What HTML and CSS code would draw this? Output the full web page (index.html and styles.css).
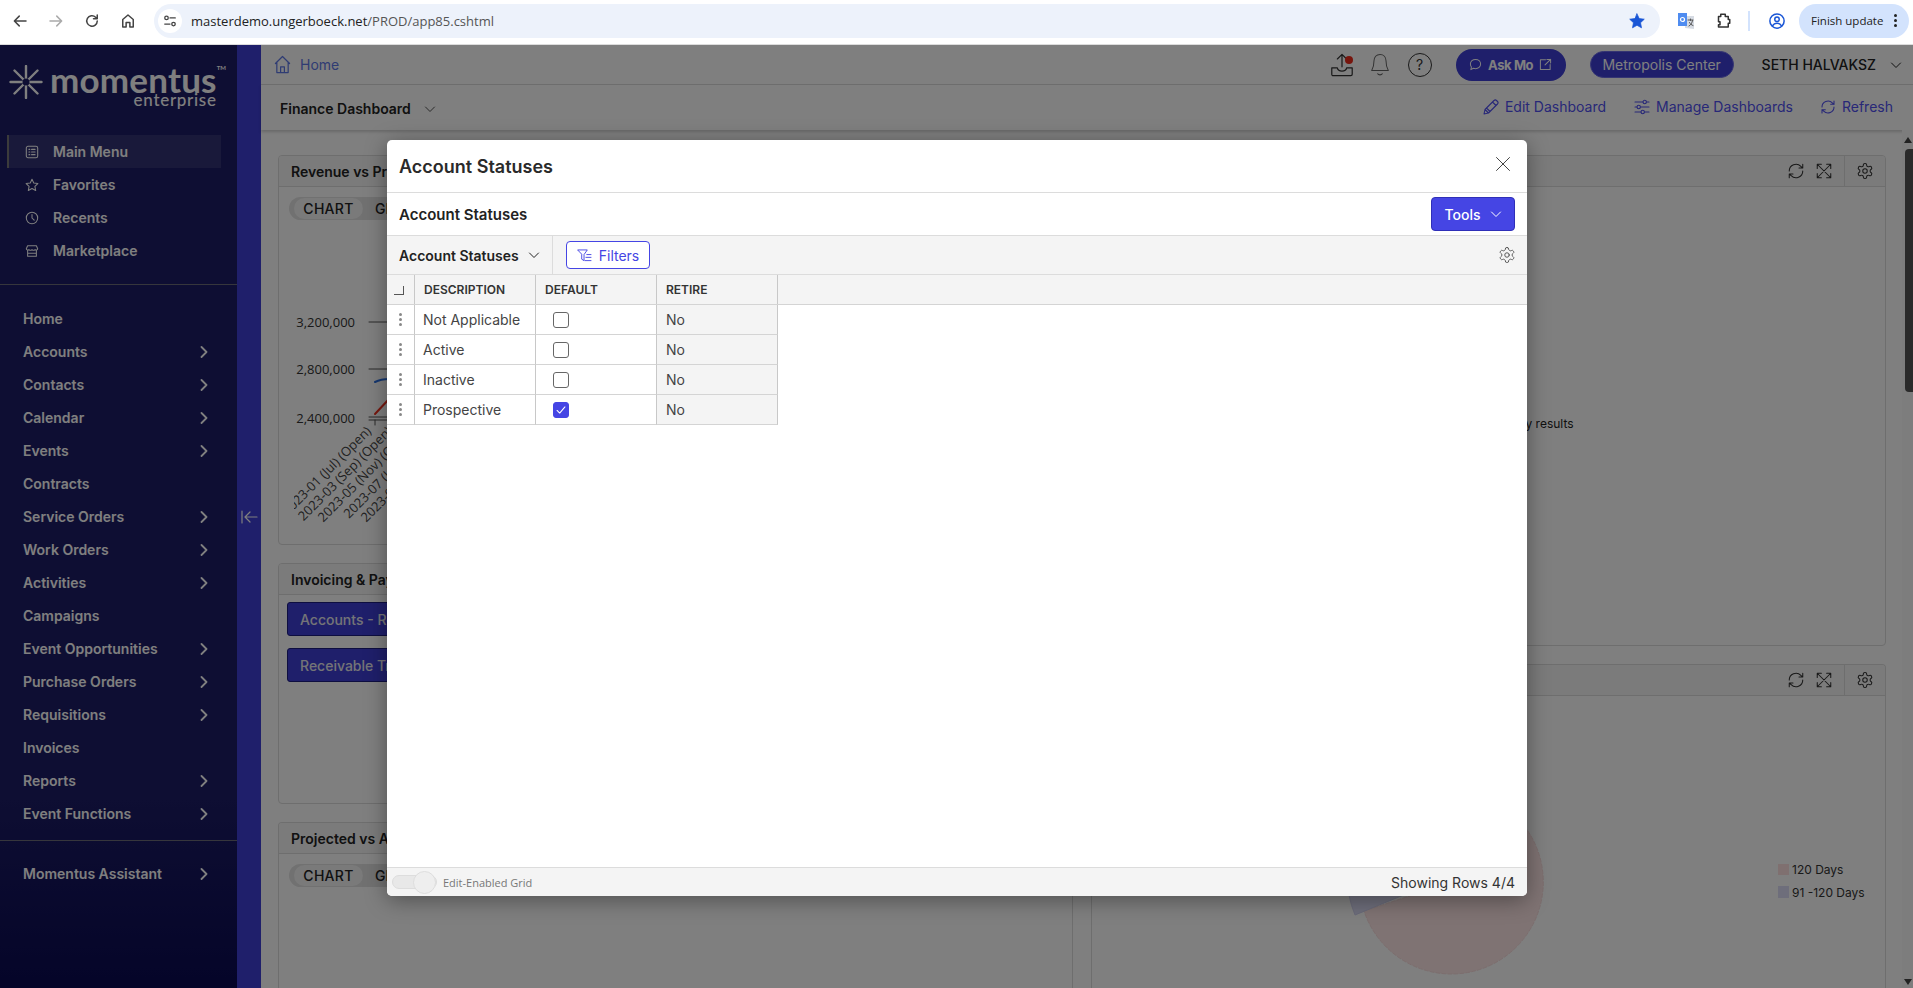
FILE: index.html
```html
<!DOCTYPE html>
<html>
  <head>
    <meta charset="utf-8" />
    <title>Finance Dashboard</title>
    <link rel="stylesheet" href="styles.css">
  </head>
  <body>
    <svg class="sprite" aria-hidden="true">
      <symbol id="i-gear" viewBox="0 0 24 24"><path d="M12.22 2h-.44a2 2 0 0 0-2 2v.18a2 2 0 0 1-1 1.73l-.43.25a2 2 0 0 1-2 0l-.15-.08a2 2 0 0 0-2.73.73l-.22.38a2 2 0 0 0 .73 2.73l.15.1a2 2 0 0 1 1 1.72v.51a2 2 0 0 1-1 1.74l-.15.09a2 2 0 0 0-.73 2.73l.22.38a2 2 0 0 0 2.73.73l.15-.08a2 2 0 0 1 2 0l.43.25a2 2 0 0 1 1 1.73V20a2 2 0 0 0 2 2h.44a2 2 0 0 0 2-2v-.18a2 2 0 0 1 1-1.73l.43-.25a2 2 0 0 1 2 0l.15.08a2 2 0 0 0 2.73-.73l.22-.39a2 2 0 0 0-.73-2.73l-.15-.08a2 2 0 0 1-1-1.74v-.5a2 2 0 0 1 1-1.74l.15-.09a2 2 0 0 0 .73-2.73l-.22-.38a2 2 0 0 0-2.73-.73l-.15.08a2 2 0 0 1-2 0l-.43-.25a2 2 0 0 1-1-1.73V4a2 2 0 0 0-2-2z"/><circle cx="12" cy="12" r="3"/></symbol>
      <symbol id="i-refresh" viewBox="0 0 24 24"><path d="M3 12a9 9 0 0 1 15.5-6.2L21 8M21 3v5h-5M21 12a9 9 0 0 1-15.5 6.2L3 16M3 21v-5h5"/></symbol>
      <symbol id="i-expand" viewBox="0 0 24 24"><path d="M21 21 3 3M21 21v-5.5M21 21h-5.5M3 3v5.5M3 3h5.5M21 3 3 21M21 3v5.5M21 3h-5.5M3 21v-5.5M3 21h5.5"/></symbol>
      <symbol id="i-chev-down" viewBox="0 0 12 12"><path d="M1.5 4 6 8.5 10.500 4"/></symbol>
      <symbol id="i-chev-right" viewBox="0 0 12 12"><path d="M3.500 1 8.500 6 3.500 11"/></symbol>
    </svg>

    <header class="browser-bar">
      <svg class="chrome-icon" viewBox="0 0 24 24"><path d="M20 12H5M11 5.500 4.500 12l6.500 6.500"/></svg>
      <svg class="chrome-icon chrome-off" viewBox="0 0 24 24"><path d="M4 12h15M13 5.500l6.500 6.500-6.500 6.500"/></svg>
      <svg class="chrome-icon" viewBox="0 0 24 24"><path d="M19 12a7 7 0 1 1-2.200-5.100L19 9M19 4v5h-5"/></svg>
      <svg class="chrome-icon" viewBox="0 0 24 24"><path d="M5 20V10l7-6 7 6v10h-4.500v-6h-5v6z"/></svg>
      <div class="address">
        <span class="site-info">
          <svg viewBox="0 0 16 16"><circle cx="4" cy="4.500" r="2"/><path d="M8 4.500h6M2 11.500h6"/><circle cx="12" cy="11.500" r="2"/></svg>
        </span>
        <span class="url">masterdemo.ungerboeck.net<span class="url-path">/PROD/app85.cshtml</span></span>
        <svg class="star" viewBox="0 0 24 24"><path d="m12 2.500 2.900 6.300 6.800.8-5 4.700 1.300 6.800-6-3.400-6 3.400 1.300-6.800-5-4.700 6.800-.8z"/></svg>
      </div>
      <svg class="translate" viewBox="0 0 18 18"><path class="tr-back" d="M8 4h9v13l-9-1z"/><path class="tr-front" d="M1 1h9v13H1z"/><circle class="tr-g" cx="5.500" cy="7.500" r="2"/><path class="tr-mark" d="M11 8h5M13.500 7v1.500M12 14c2-1 3-3 3.500-5.500M12.500 10.500c.8 1.500 2 2.500 3.500 3"/></svg>
      <svg class="chrome-icon ext" viewBox="0 0 24 24"><path d="M9 3h6v3h4v4h2v5h-2v5H6v-3h2v-4H6V6h3z"/></svg>
      <span class="chrome-divider"></span>
      <svg class="chrome-icon profile" viewBox="0 0 24 24"><circle cx="12" cy="12" r="9.500"/><circle cx="12" cy="9.500" r="3"/><path d="M6 18.500c1.500-2.500 3.500-3.500 6-3.500s4.500 1 6 3.500"/></svg>
      <div class="finish-update">
        <span>Finish update</span>
        <span class="kebab"><i></i><i></i><i></i></span>
      </div>
    </header>

    <div class="app">
      <aside class="sidebar">
        <div class="logo">
          <svg class="logo-mark" viewBox="0 0 34 34"><path d="M17 1v32M1.500 17h31M5.500 5.500l23 23M28.500 5.500l-23 23"/><circle cx="17" cy="17" r="3.500"/></svg>
          <div class="logo-words">
            <span class="logo-name">momentus<sup>TM</sup></span>
            <span class="logo-sub">enterprise</span>
          </div>
        </div>
        <nav class="side-top">
          <a class="side-link active">
            <svg viewBox="0 0 16 16"><rect x="1.500" y="1.500" width="13" height="13" rx="2"/><path d="M4.500 5h1M7.500 5h4M4.500 8h1M7.500 8h4M4.500 11h1M7.500 11h4"/></svg>
            Main Menu
          </a>
          <a class="side-link">
            <svg viewBox="0 0 16 16"><path d="m8 1.500 2 4.300 4.700.6-3.400 3.200.9 4.700L8 12l-4.200 2.300.9-4.700L1.300 6.400 6 5.800z"/></svg>
            Favorites
          </a>
          <a class="side-link">
            <svg viewBox="0 0 16 16"><circle cx="8" cy="8" r="6.500"/><path d="M8 4v4l2.500 2.500"/></svg>
            Recents
          </a>
          <a class="side-link">
            <svg viewBox="0 0 16 16"><path d="M3 2h10l1.500 3.500c0 1.500-2 1.800-3 .8-1 1-2.500 1-3.500 0-1 1-2.500 1-3.500 0-1 1-3 .7-3-.8zM3 7.500V14h10V7.500M3 10.500h10"/></svg>
            Marketplace
          </a>
        </nav>
        <nav class="side-main">
          <a class="nav-link">Home</a>
          <a class="nav-link">Accounts <svg><use href="#i-chev-right"/></svg></a>
          <a class="nav-link">Contacts <svg><use href="#i-chev-right"/></svg></a>
          <a class="nav-link">Calendar <svg><use href="#i-chev-right"/></svg></a>
          <a class="nav-link">Events <svg><use href="#i-chev-right"/></svg></a>
          <a class="nav-link">Contracts</a>
          <a class="nav-link">Service Orders <svg><use href="#i-chev-right"/></svg></a>
          <a class="nav-link">Work Orders <svg><use href="#i-chev-right"/></svg></a>
          <a class="nav-link">Activities <svg><use href="#i-chev-right"/></svg></a>
          <a class="nav-link">Campaigns</a>
          <a class="nav-link">Event Opportunities <svg><use href="#i-chev-right"/></svg></a>
          <a class="nav-link">Purchase Orders <svg><use href="#i-chev-right"/></svg></a>
          <a class="nav-link">Requisitions <svg><use href="#i-chev-right"/></svg></a>
          <a class="nav-link">Invoices</a>
          <a class="nav-link">Reports <svg><use href="#i-chev-right"/></svg></a>
          <a class="nav-link">Event Functions <svg><use href="#i-chev-right"/></svg></a>
        </nav>
        <nav class="side-bottom">
          <a class="nav-link">Momentus Assistant <svg><use href="#i-chev-right"/></svg></a>
        </nav>
      </aside>

      <div class="rail">
        <svg viewBox="0 0 17 14"><path d="M1 1v12M16 7H4M9 2 4 7l5 5"/></svg>
      </div>

      <main class="main">
        <div class="topbar">
          <a class="home-link">
            <svg viewBox="0 0 18 20"><path d="M1.500 9 9 1.500 16.500 9M3 8v10.500h12V8M7 18.500v-6h4v6"/></svg>
            Home
          </a>
          <div class="top-actions">
            <span class="upload">
              <svg viewBox="0 0 24 28"><path d="M12 16V2.500M7 7.500l5-5 5 5M1 17h6c.5 2.500 2.500 3.500 5 3.500s4.500-1 5-3.500h6v7c0 1-.5 1.500-1.500 1.500h-19C1.500 25.500 1 25 1 24z"/></svg>
              <i class="upload-dot"></i>
            </span>
            <svg class="bell" viewBox="0 0 20 26"><path d="M10 1.500c-4 0-6.500 3-6.500 7 0 5-1 8-2.500 10.500h18c-1.500-2.500-2.500-5.500-2.500-10.500 0-4-2.500-7-6.500-7zM7.500 22.500c.8 1.600 4.200 1.600 5 0"/></svg>
            <span class="help">?</span>
            <button class="ask-mo">
              <svg viewBox="0 0 14 14"><path d="M7 1.500c3 0 5.500 2 5.500 5s-2.500 5-5.500 5c-.8 0-1.600-.2-2.300-.4L2 12.500l.6-2.800C1.900 8.800 1.500 7.700 1.500 6.500c0-3 2.500-5 5.500-5z"/></svg>
              Ask Mo
              <svg viewBox="0 0 14 14"><path d="M7 2H1.500v10.500H12V7M8.500 1.500h4v4M12.500 1.500 6.500 7.500"/></svg>
            </button>
            <button class="venue">Metropolis Center</button>
            <span class="user">SETH HALVAKSZ</span>
            <svg class="chev-sm"><use href="#i-chev-down"/></svg>
          </div>
        </div>

        <div class="dashbar">
          <div class="dash-name">
            Finance Dashboard
            <svg class="chev-sm"><use href="#i-chev-down"/></svg>
          </div>
          <div class="dash-actions">
            <a class="dash-action">
              <svg viewBox="0 0 16 16"><path d="M1 15l1-4.500L11 1.500c.8-.7 1.800-.7 2.500 0l1 1c.7.700.7 1.700 0 2.500L5.500 14zM2 10.500 5.500 14M3.500 9l3.500 3.500M9.500 3l3.500 3.500"/></svg>
              Edit Dashboard
            </a>
            <a class="dash-action">
              <svg viewBox="0 0 16 16"><path d="M1 3h8M12.500 3H15M1 8h2M6.500 8H15M1 13h6M10.500 13H15"/><circle cx="10.700" cy="3" r="1.700"/><circle cx="4.700" cy="8" r="1.700"/><circle cx="8.700" cy="13" r="1.700"/></svg>
              Manage Dashboards
            </a>
            <a class="dash-action">
              <svg class="dash-refresh"><use href="#i-refresh"/></svg>
              Refresh
            </a>
          </div>
        </div>

        <div class="dash-area">
          <div class="dash-grid">
            <div class="dash-col">
              <section class="card card-revenue">
                <div class="card-head"><span class="card-title">Revenue vs Projected</span></div>
                <div class="card-body">
                  <div class="view-toggle"><span class="view-on">CHART</span><span class="view-off">GRID</span></div>
                  <svg class="chart" width="794" height="358">
                    <defs><clipPath id="axisClip"><rect x="15" y="0" width="779" height="358"/></clipPath></defs>
                    <g class="axis-label">
                      <text x="76" y="140">3,200,000</text>
                      <text x="76" y="187">2,800,000</text>
                      <text x="76" y="236">2,400,000</text>
                    </g>
                    <path class="axis-line" d="M90 135h700M90 182h700M90 230h700M90 233h700M96 233v5"/>
                    <path class="series-blue" d="M96 195q6-3 14-3"/>
                    <path class="series-red" d="M96 227l14-15"/>
                    <g class="axis-ticks" clip-path="url(#axisClip)">
                      <text transform="translate(93 245) rotate(-45)">2023-01 (Jul) (Open)</text>
                      <text transform="translate(114 245) rotate(-45)">2023-03 (Sep) (Open)</text>
                      <text transform="translate(135 245) rotate(-45)">2023-05 (Nov) (Open)</text>
                      <text transform="translate(157 245) rotate(-45)">2023-07 (Jan) (Open)</text>
                      <text transform="translate(178 245) rotate(-45)">2023-09 (Mar) (Open)</text>
                    </g>
                  </svg>
                </div>
              </section>
              <section class="card card-invoicing">
                <div class="card-head"><span class="card-title">Invoicing &amp; Payments</span></div>
                <div class="card-body quick-links">
                  <a class="quick-btn">Accounts - Receivable</a>
                  <a class="quick-btn">Receivable Transactions</a>
                </div>
              </section>
              <section class="card card-fill">
                <div class="card-head"><span class="card-title">Projected vs Actual</span></div>
                <div class="card-body">
                  <div class="view-toggle"><span class="view-on">CHART</span><span class="view-off">GRID</span></div>
                </div>
              </section>
            </div>
            <div class="dash-col">
              <section class="card card-results">
                <div class="card-head card-head-end">
                  <svg class="tool"><use href="#i-refresh"/></svg>
                  <svg class="tool"><use href="#i-expand"/></svg>
                  <span class="tool-sep"><svg class="tool"><use href="#i-gear"/></svg></span>
                </div>
                <div class="card-body results-note">Select filters to display results</div>
              </section>
              <section class="card card-fill">
                <div class="card-head card-head-end">
                  <svg class="tool"><use href="#i-refresh"/></svg>
                  <svg class="tool"><use href="#i-expand"/></svg>
                  <span class="tool-sep"><svg class="tool"><use href="#i-gear"/></svg></span>
                </div>
                <div class="card-body">
                  <svg class="chart" width="794" height="300">
                    <path class="pie-red" d="M360 186 272 215A92 92 0 1 0 360 94Z"/>
                    <path class="pie-blue" d="M360 179 263 219A105 105 0 0 1 255 179Z"/>
                    <rect class="pie-red-key" x="686" y="168" width="11" height="11"/>
                    <text class="legend" x="700" y="178">120 Days</text>
                    <rect class="pie-blue-key" x="686" y="190" width="11" height="12"/>
                    <text class="legend" x="700" y="201">91 -120 Days</text>
                  </svg>
                </div>
              </section>
            </div>
          </div>
          <div class="scrollbar">
            <i class="arrow-up"></i>
            <i class="thumb"></i>
            <i class="arrow-down"></i>
          </div>
        </div>
      </main>

      <div class="overlay"></div>

      <div class="modal">
        <div class="modal-head">
          <h2>Account Statuses</h2>
          <svg class="modal-close" viewBox="0 0 14 14"><path d="M.5.5l13 13M13.500.5l-13 13"/></svg>
        </div>
        <div class="modal-sub">
          <h3>Account Statuses</h3>
          <button class="tools-btn">Tools <svg class="chev-sm"><use href="#i-chev-down"/></svg></button>
        </div>
        <div class="grid-tools">
          <div class="view-name">
            Account Statuses
            <svg class="chev-sm"><use href="#i-chev-down"/></svg>
          </div>
          <button class="filters-btn">
            <svg viewBox="0 0 16 14"><path d="M1 1h10L7.500 6v6.500L5 11V6zM10.500 6H15M9.500 9H15M8.500 12.500H15"/></svg>
            Filters
          </button>
          <svg class="grid-gear"><use href="#i-gear"/></svg>
        </div>
        <div class="grid-head">
          <div class="cell cell-handle"><span class="corner"></span></div>
          <div class="cell">DESCRIPTION</div>
          <div class="cell">DEFAULT</div>
          <div class="cell">RETIRE</div>
        </div>
        <div class="grid-body">
          <div class="grid-row">
            <div class="cell cell-handle"><span class="kebab"><i></i><i></i><i></i></span></div>
            <div class="cell cell-desc">Not Applicable</div>
            <div class="cell cell-check"><span class="check"></span></div>
            <div class="cell cell-muted">No</div>
          </div>
          <div class="grid-row">
            <div class="cell cell-handle"><span class="kebab"><i></i><i></i><i></i></span></div>
            <div class="cell cell-desc">Active</div>
            <div class="cell cell-check"><span class="check"></span></div>
            <div class="cell cell-muted">No</div>
          </div>
          <div class="grid-row">
            <div class="cell cell-handle"><span class="kebab"><i></i><i></i><i></i></span></div>
            <div class="cell cell-desc">Inactive</div>
            <div class="cell cell-check"><span class="check"></span></div>
            <div class="cell cell-muted">No</div>
          </div>
          <div class="grid-row">
            <div class="cell cell-handle"><span class="kebab"><i></i><i></i><i></i></span></div>
            <div class="cell cell-desc">Prospective</div>
            <div class="cell cell-check">
              <span class="check checked"><svg viewBox="0 0 16 16"><path d="M3.500 8.500l3 3 6-7"/></svg></span>
            </div>
            <div class="cell cell-muted">No</div>
          </div>
        </div>
        <div class="modal-foot">
          <div class="edit-toggle">
            <span class="switch"><i></i></span>
            Edit-Enabled Grid
          </div>
          <span class="row-count">Showing Rows 4/4</span>
        </div>
      </div>
    </div>
  </body>
</html>
```

FILE: styles.css
```css
* {
  box-sizing: border-box;
}

html,
body {
  height: 100%;
  margin: 0;
  overflow: hidden;
}

body {
  display: flex;
  flex-direction: column;
  font-family: Inter, "Noto Sans", sans-serif;
  font-size: 14px;
  color: #222;
  background: #fff;
}

svg {
  flex: none;
  fill: none;
  stroke: currentColor;
  stroke-linecap: round;
  stroke-linejoin: round;
}

i {
  display: block;
}

a {
  color: inherit;
  text-decoration: none;
}

button {
  font-family: inherit;
}

.sprite {
  display: none;
}

/* browser chrome */
.browser-bar {
  height: 45px;
  flex: none;
  display: flex;
  align-items: center;
  padding: 0 4px 3px 11px;
  border-bottom: 1px solid #dcdcdc;
  background: #fff;
  color: #444;
}

.chrome-icon {
  width: 18px;
  height: 18px;
  margin-right: 18px;
  stroke-width: 2;
}

.chrome-off {
  color: #aaa;
}

.address {
  flex: 1;
  height: 34px;
  display: flex;
  align-items: center;
  margin-left: -1px;
  padding: 0 14px 0 4px;
  border-radius: 17px;
  background: #edf2fb;
}

.site-info {
  width: 24px;
  height: 24px;
  display: flex;
  align-items: center;
  justify-content: center;
  border-radius: 50%;
  background: #fff;
}

.site-info svg {
  width: 14px;
  height: 14px;
  stroke-width: 1.5;
}

.url {
  flex: 1;
  margin-left: 9px;
  font-family: "Open Sans", sans-serif;
  font-size: 13px;
  color: #222;
}

.url-path {
  color: #555;
}

.star {
  width: 18px;
  height: 18px;
  fill: #1a56d6;
  stroke: #1a56d6;
}

.translate {
  width: 18px;
  height: 18px;
  margin-left: 17px;
  stroke: none;
}

.tr-back {
  fill: #d6dbe3;
}

.tr-front {
  fill: #4f8cf0;
}

.tr-g {
  stroke: #fff;
  stroke-width: 1.2;
}

.tr-mark {
  stroke: #555;
  stroke-width: 1;
}

.ext {
  margin-left: 19px;
  margin-right: 0;
  color: #333;
}

.chrome-divider {
  width: 2px;
  height: 20px;
  margin: 0 18px 0 16px;
  background: #d3e3fd;
}

.profile {
  margin-right: 13px;
  color: #1a56d6;
}

.finish-update {
  width: 110px;
  height: 34px;
  display: flex;
  align-items: center;
  justify-content: space-between;
  padding: 0 12px;
  border-radius: 17px;
  background: #d3e3fd;
  font-family: "Open Sans", sans-serif;
  font-size: 11.5px;
  color: #222;
}

.kebab {
  display: flex;
  flex-direction: column;
  gap: 2px;
}

.kebab i {
  width: 3px;
  height: 3px;
  border-radius: 50%;
  background: currentColor;
}

/* app frame */
.app {
  flex: 1;
  display: flex;
  position: relative;
  min-height: 0;
}

.sidebar {
  width: 237px;
  flex: none;
  background: linear-gradient(#1c1c66 0, #1c1c66 80%, #0a0a52 100%);
  color: #fff;
  font-weight: 600;
}

.logo {
  height: 90px;
  display: flex;
  padding: 20px 0 0 9px;
  color: #fff;
}

.logo-mark {
  width: 34px;
  height: 34px;
  stroke-width: 2.4;
}

.logo-mark circle {
  fill: #1c1c66;
  stroke: none;
}

.logo-words {
  display: flex;
  flex-direction: column;
  align-items: flex-end;
  margin-left: 7px;
  font-family: Lato, sans-serif;
  font-weight: 700;
}

.logo-name {
  position: relative;
  font-size: 35px;
  line-height: 28px;
  letter-spacing: .2px;
}

.logo-name sup {
  position: absolute;
  top: 0;
  left: 100%;
  font-size: 6px;
  line-height: 6px;
  letter-spacing: 0;
}

.logo-sub {
  font-size: 17px;
  line-height: 14px;
  font-weight: 500;
  letter-spacing: .7px;
}

.side-top {
  height: 150px;
  padding: 0 16px 0 7px;
  border-bottom: 1px solid #6c6c78;
}

.side-link {
  height: 33px;
  display: flex;
  align-items: center;
  padding-left: 16px;
  border-left: 2px solid transparent;
}

.side-link svg {
  width: 14px;
  height: 14px;
  margin-right: 14px;
  stroke-width: 1.2;
}

.side-link.active {
  border-left-color: #777;
  background: rgba(255, 255, 255, .1);
}

.side-main {
  padding: 17px 0 10px;
  border-bottom: 1px solid #6c6c78;
}

.side-bottom {
  padding-top: 16px;
}

.nav-link {
  height: 33px;
  display: flex;
  align-items: center;
  justify-content: space-between;
  padding: 0 27px 0 23px;
}

.nav-link svg {
  width: 12px;
  height: 12px;
  stroke-width: 1.8;
}

.rail {
  width: 24px;
  flex: none;
  display: flex;
  align-items: center;
  justify-content: center;
  background: #3e3ed6;
  color: #fff;
}

.rail svg {
  width: 17px;
  height: 14px;
  stroke-width: 1.2;
}

.main {
  flex: 1;
  min-width: 0;
  display: flex;
  flex-direction: column;
  background: #fff;
}

/* top bar */
.topbar {
  height: 40px;
  flex: none;
  display: flex;
  align-items: center;
  justify-content: space-between;
  padding: 0 11px 0 13px;
  border-bottom: 1px solid #dcdcdc;
}

.home-link {
  display: flex;
  align-items: center;
  gap: 9px;
  color: #5f78e6;
}

.home-link svg {
  width: 17px;
  height: 19px;
  stroke-width: 1.3;
}

.top-actions {
  display: flex;
  align-items: center;
}

.upload {
  position: relative;
  width: 24px;
  height: 26px;
  margin-right: 16px;
  color: #333;
}

.upload svg {
  width: 24px;
  height: 26px;
  stroke-width: 1.3;
}

.upload-dot {
  position: absolute;
  top: 4px;
  right: 1px;
  width: 8px;
  height: 8px;
  border-radius: 50%;
  background: #ee2a1a;
}

.bell {
  width: 20px;
  height: 24px;
  margin-right: 18px;
  color: #666;
  stroke-width: 1.1;
}

.help {
  width: 24px;
  height: 24px;
  margin-right: 24px;
  display: flex;
  align-items: center;
  justify-content: center;
  border: 1.2px solid #333;
  border-radius: 50%;
  font-size: 14px;
  color: #333;
}

.ask-mo {
  width: 110px;
  height: 32px;
  margin-right: 24px;
  display: flex;
  align-items: center;
  justify-content: center;
  gap: 6px;
  border: 0;
  border-radius: 16px;
  background: #3e3ed6;
  font-size: 13px;
  font-weight: 700;
  letter-spacing: -.4px;
  color: #fff;
}

.ask-mo svg {
  width: 13px;
  height: 13px;
  stroke-width: 1.1;
}

.venue {
  width: 144px;
  height: 27px;
  margin-right: 28px;
  border: 1px solid #6a6ae6;
  border-radius: 14px;
  background: #3e3ed6;
  font-size: 14px;
  color: #fff;
}

.user {
  margin-right: 14px;
  font-weight: 500;
  white-space: nowrap;
}

.chev-sm {
  width: 12px;
  height: 12px;
  stroke-width: 1;
}

/* dashboard bar */
.dashbar {
  height: 45px;
  flex: none;
  display: flex;
  align-items: center;
  justify-content: space-between;
  padding: 0 20px 2px 19px;
  box-shadow: 0 2px 3px rgba(0, 0, 0, .18);
  position: relative;
  background: #fff;
}

.dash-name {
  display: flex;
  align-items: center;
  gap: 13px;
  margin-top: 4px;
  font-weight: 600;
}

.dash-name .chev-sm {
  color: #555;
}

.dash-actions {
  display: flex;
  gap: 28px;
}

.dash-action {
  display: flex;
  align-items: center;
  gap: 6px;
  color: #5050f0;
}

.dash-action svg {
  width: 16px;
  height: 16px;
  stroke-width: 1.1;
}

.dash-action .dash-refresh {
  margin-left: -1px;
  stroke-width: 1.6;
}

.dash-area {
  flex: 1;
  min-height: 0;
  display: flex;
}

.dash-grid {
  flex: 1;
  min-width: 0;
  display: grid;
  grid-template-columns: 1fr 1fr;
  column-gap: 18px;
  padding: 25px 16px 0 17px;
}

.dash-col {
  min-width: 0;
  display: flex;
  flex-direction: column;
  gap: 18px;
}

.card {
  flex: none;
  border: 1px solid #dcdcdc;
  border-radius: 4px;
  overflow: hidden;
  background: #fff;
}

.card-revenue {
  height: 390px;
}

.card-invoicing {
  height: 241px;
}

.card-results {
  height: 491px;
}

.card-fill {
  flex: 1;
  border-bottom: 0;
  border-radius: 4px 4px 0 0;
}

.card-head {
  height: 31px;
  display: flex;
  align-items: center;
  padding-left: 12px;
  border-bottom: 1px solid #dcdcdc;
  background: #f6f6f6;
}

.card-head-end {
  justify-content: flex-end;
  padding: 0;
  gap: 10px;
}

.card-title {
  font-weight: 600;
}

.tool {
  width: 18px;
  height: 18px;
  color: #333;
  stroke-width: 1.4;
}

.tool-sep {
  height: 100%;
  width: 41px;
  margin-left: 1px;
  display: flex;
  align-items: center;
  justify-content: center;
  border-left: 1px solid #dcdcdc;
}

.card-body {
  position: relative;
}

.chart {
  display: block;
  position: absolute;
  top: 0;
  left: 0;
  stroke: none;
}

.view-toggle {
  position: absolute;
  z-index: 1;
  top: 10px;
  left: 10px;
  height: 23px;
  display: flex;
  align-items: center;
  padding: 0 5px;
  gap: 12px;
  border-radius: 12px;
  background: #e2e2e2;
  font-weight: 500;
}

.view-on {
  width: 69px;
  height: 21px;
  display: flex;
  align-items: center;
  justify-content: center;
  border-radius: 11px;
  background: #f4f4f4;
  letter-spacing: .3px;
}

.axis-label {
  font-family: "Open Sans", sans-serif;
  font-size: 13px;
  text-anchor: end;
  fill: #333;
}

.axis-line {
  stroke: #555;
  stroke-width: 1;
}

.series-blue {
  stroke: #2a6fe0;
  stroke-width: 2;
}

.series-red {
  stroke: #f0301f;
  stroke-width: 2;
}

.axis-ticks {
  font-family: "Open Sans", sans-serif;
  font-size: 13px;
  text-anchor: end;
  fill: #444;
}

.quick-links {
  display: flex;
  flex-direction: column;
  align-items: flex-start;
  gap: 12px;
  padding: 7px 0 0 8px;
}

.quick-btn {
  height: 34px;
  display: flex;
  align-items: center;
  padding: 0 12px;
  width: 300px;
  border: 1px solid #1c1c80;
  border-radius: 3px;
  background: #3e3ed6;
  color: #e8e8ee;
  font-weight: 500;
  white-space: nowrap;
}

.results-note {
  height: 458px;
  display: flex;
  align-items: center;
  justify-content: center;
  padding-top: 14px;
  font-size: 12px;
  color: #222;
}

.pie-red {
  fill: #fee6e6;
  stroke: #f8dcdc;
  stroke-width: 1;
  stroke-dasharray: 4 2;
}

.pie-blue {
  fill: #dcdcf6;
  stroke: #d2d2f0;
  stroke-width: 1;
}

.pie-red-key {
  fill: #fee0e0;
}

.pie-blue-key {
  fill: #dcdcf6;
}

.legend {
  font-size: 12px;
  fill: #333;
}

.scrollbar {
  width: 11px;
  flex: none;
  position: relative;
  background: #fafafa;
}

.thumb {
  position: absolute;
  top: 19px;
  right: 0;
  width: 8px;
  height: 243px;
  border-radius: 4px 0 0 4px;
  background: #555;
}

.arrow-up,
.arrow-down {
  position: absolute;
  right: 1px;
  border-left: 4px solid transparent;
  border-right: 4px solid transparent;
}

.arrow-up {
  top: 7px;
  border-bottom: 6px solid #444;
}

.arrow-down {
  bottom: 3px;
  border-top: 6px solid #444;
}

.overlay {
  position: absolute;
  z-index: 2;
  inset: 0;
  background: rgba(0, 0, 0, .5);
}

/* modal */
.modal {
  position: absolute;
  z-index: 3;
  top: 95px;
  left: 387px;
  width: 1140px;
  height: 756px;
  display: flex;
  flex-direction: column;
  border-radius: 5px;
  overflow: hidden;
  background: #fff;
  box-shadow: 0 4px 22px rgba(0, 0, 0, .38);
}

.modal-head {
  height: 53px;
  flex: none;
  display: flex;
  align-items: center;
  justify-content: space-between;
  padding: 0 17px 0 12px;
  border-bottom: 1px solid #dcdcdc;
}

.modal-head h2 {
  margin: 0;
  font-size: 18px;
  font-weight: 600;
  color: #2a2a2a;
}

.modal-close {
  width: 14px;
  height: 14px;
  margin-top: -5px;
  color: #444;
  stroke-width: 1;
}

.modal-sub {
  height: 43px;
  flex: none;
  display: flex;
  align-items: center;
  justify-content: space-between;
  padding: 0 12px;
  border-bottom: 1px solid #dcdcdc;
}

.modal-sub h3 {
  margin: 0;
  font-size: 15px;
  font-weight: 600;
  color: #222;
}

.tools-btn {
  width: 84px;
  height: 34px;
  display: flex;
  align-items: center;
  justify-content: center;
  gap: 9px;
  border: 1px solid #2f2fb8;
  border-radius: 4px;
  background: #4545e4;
  font-size: 14px;
  font-weight: 500;
  color: #fff;
}

.grid-tools {
  height: 39px;
  flex: none;
  display: flex;
  align-items: center;
  padding-right: 11px;
  border-bottom: 1px solid #dcdcdc;
  background: #f4f4f4;
}

.view-name {
  width: 166px;
  height: 100%;
  display: flex;
  align-items: center;
  gap: 9px;
  padding-left: 12px;
  border-right: 1px solid #dcdcdc;
  font-weight: 600;
  color: #222;
}

.filters-btn {
  width: 84px;
  height: 28px;
  margin-left: 13px;
  display: flex;
  align-items: center;
  justify-content: center;
  gap: 7px;
  border: 1px solid #4545e4;
  border-radius: 4px;
  background: #fff;
  font-size: 14px;
  color: #4545e4;
}

.filters-btn svg {
  width: 15px;
  height: 13px;
  stroke-width: 1;
}

.grid-gear {
  width: 18px;
  height: 18px;
  margin-left: auto;
  color: #555;
  stroke-width: 1.3;
}

.grid-head,
.grid-row {
  display: grid;
  grid-template-columns: 28px 121px 121px 121px;
  flex: none;
}

.grid-head {
  height: 30px;
  border-bottom: 1px solid #d4d4d4;
  background: #f4f4f4;
  font-size: 12px;
  font-weight: 600;
  color: #333;
}

.grid-body {
  flex: 1;
}

.grid-row {
  width: 391px;
  height: 30px;
  color: #444;
}

.cell {
  display: flex;
  align-items: center;
  padding-left: 9px;
  border-right: 1px solid #c8c8c8;
  border-bottom: 1px solid #d4d4d4;
}

.grid-head .cell {
  border-bottom: 0;
}

.cell-handle {
  padding: 0 0 1px 12px;
  color: #888;
}

.grid-head .cell-handle {
  padding: 0 0 0 7px;
}

.corner {
  width: 10px;
  height: 9px;
  margin-top: 2px;
  border-right: 1px solid #555;
  border-bottom: 1px solid #555;
}

.cell-desc {
  padding-left: 8px;
}

.cell-check {
  padding-left: 17px;
}

.cell-muted {
  background: #f4f4f4;
}

.check {
  width: 16px;
  height: 16px;
  display: flex;
  border: 1px solid #666;
  border-radius: 3px;
  background: #fff;
}

.check.checked {
  border-color: #4545e4;
  background: #4545e4;
  color: #fff;
}

.check svg {
  width: 14px;
  height: 14px;
  stroke-width: 1.2;
}

.modal-foot {
  height: 29px;
  flex: none;
  display: flex;
  align-items: center;
  justify-content: space-between;
  padding: 0 12px 0 5px;
  border-top: 1px solid #dcdcdc;
  background: #f4f4f4;
}

.edit-toggle {
  display: flex;
  align-items: center;
  gap: 6px;
  font-family: "Open Sans", sans-serif;
  font-size: 11px;
  color: #777;
}

.switch {
  position: relative;
  flex: none;
  width: 45px;
  height: 14px;
  border: 1px solid #ddd;
  border-radius: 7px;
  background: #e8e8e8;
}

.switch i {
  position: absolute;
  top: -5px;
  right: 0;
  width: 23px;
  height: 23px;
  border: 1.5px solid #ddd;
  border-radius: 50%;
  background: #eee;
}

.row-count {
  font-size: 14px;
  color: #333;
}
```
